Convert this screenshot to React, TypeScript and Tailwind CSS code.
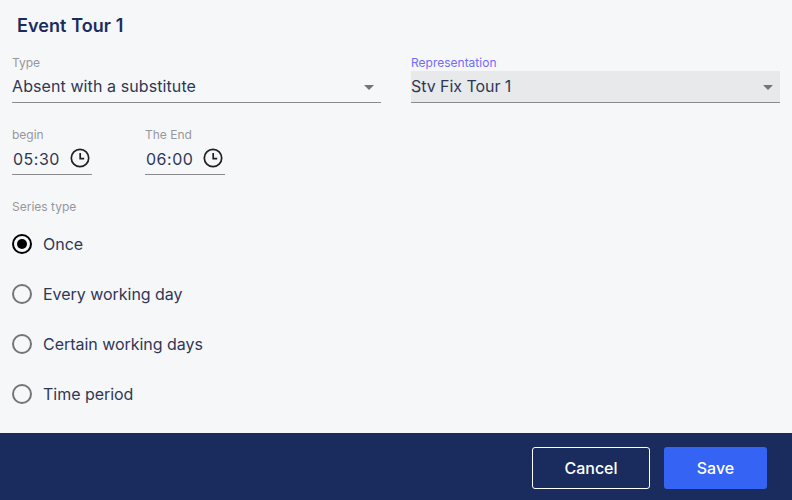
const font = { fontFamily: 'Inter, sans-serif' }

function Caret() {
  return <span className="mt-[2px] mr-[7px] h-0 w-0 border-x-[5px] border-t-[5px] border-x-transparent border-t-[#757575]" />
}

function ClockIcon() {
  return (
    <svg width="20" height="20" viewBox="0 0 20 20" fill="none" stroke="#1f1f1f" strokeWidth="1.7">
      <circle cx="10" cy="10" r="8.7" />
      <path d="M10.2 5v5.6h4" />
    </svg>
  )
}

function SelectField({ label, value, active }: { label: string; value: string; active?: boolean }) {
  return (
    <div className="w-[369px]">
      <div className={`h-[16px] text-[12px] leading-[16px] ${active ? 'text-[#736cf5]' : 'text-[#96979c]'}`}>{label}</div>
      <div className={`flex h-[32px] items-center justify-between border-b border-[#8b8b8f] ${active ? 'bg-[#e8e9eb]' : ''}`}>
        <span className={`mb-[1px] text-[16px] leading-[30px] text-[#2f3757] ${active ? 'tracking-[-0.05px]' : 'tracking-[0.09px]'}`}>{value}</span>
        <Caret />
      </div>
    </div>
  )
}

function TimeField({ label, value }: { label: string; value: string }) {
  return (
    <div className="w-[80px]">
      <div className="h-[16px] text-[12px] leading-[16px] text-[#96979c]">{label}</div>
      <div className="flex h-[32px] items-center border-b border-[#8b8b8f] pl-[1px]">
        <span className="w-[48px] text-[16px] tracking-[0.5px] text-[#2f3757]">{value}</span>
        <span className="mb-[1px] ml-[9px]"><ClockIcon /></span>
      </div>
    </div>
  )
}

function Radio({ label, checked }: { label: string; checked?: boolean }) {
  return (
    <div className="flex h-[50px] items-center gap-[11px]">
      {checked ? (
        <span className="flex h-[20px] w-[20px] items-center justify-center rounded-full border-2 border-black">
          <span className="h-[10px] w-[10px] rounded-full bg-black" />
        </span>
      ) : (
        <span className="h-[20px] w-[20px] rounded-full border-2 border-[#757575]" />
      )}
      <span className="text-[16px] tracking-[-0.03px] text-[#2f3757]">{label}</span>
    </div>
  )
}

export default function App() {
  return (
    <div className="flex h-[500px] w-[792px] flex-col bg-[#f6f7f9]" style={font}>
      <div className="flex-1 px-[12px]">
        <h1 className="pl-[5px] pt-[15px] text-[18px] leading-[22px] tracking-[0.08px] font-semibold text-[#1a2c5e]">Event Tour 1</h1>
        <div className="mt-[18px] flex gap-[30px]">
          <SelectField label="Type" value="Absent with a substitute" />
          <SelectField label="Representation" value="Stv Fix Tour 1" active />
        </div>
        <div className="mt-[24px] flex gap-[53px]">
          <TimeField label="begin" value="05:30" />
          <TimeField label="The End" value="06:00" />
        </div>
        <div className="mt-[24px] h-[16px] text-[12px] leading-[16px] text-[#96979c]">Series type</div>
        <div className="mt-[4px]">
          <Radio label="Once" checked />
          <Radio label="Every working day" />
          <Radio label="Certain working days" />
          <Radio label="Time period" />
        </div>
      </div>
      <div className="flex h-[67px] items-center justify-end gap-[14px] bg-[#1a2c5e] pt-[2px] pr-[25px]">
        <button className="h-[42px] w-[118px] rounded-[3px] border border-white text-[16px] font-medium text-white">Cancel</button>
        <button className="h-[42px] w-[103px] rounded-[3px] bg-[#3563f3] text-[16px] font-medium text-white">Save</button>
      </div>
    </div>
  )
}
